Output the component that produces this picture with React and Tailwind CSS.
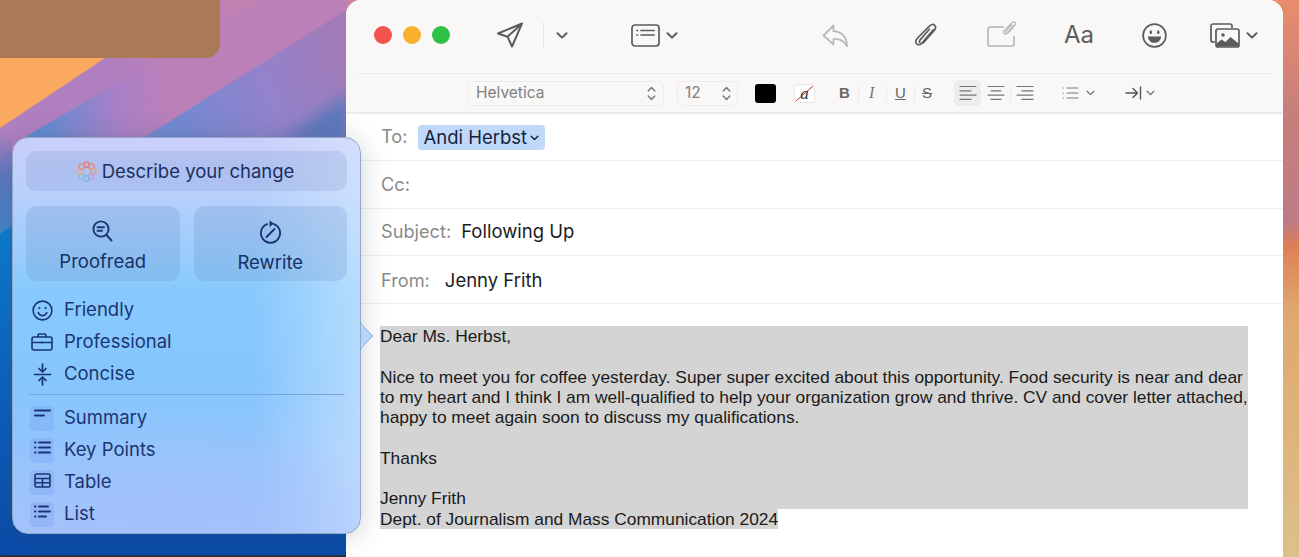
import React from 'react';

const Chevron = ({ className = '', w = 12, h = 7, sw = 2 }) => (
    <svg width={w} height={h} viewBox="0 0 12 7" className={className} fill="none" stroke="currentColor" strokeWidth={sw} strokeLinecap="round" strokeLinejoin="round">
        <path d="M1.5 1.2 6 5.6l4.5-4.4" />
    </svg>
);

const UpDown = () => (
    <svg width="9" height="15" viewBox="0 0 9 15" fill="none" stroke="#777" strokeWidth="1.4" strokeLinecap="round" strokeLinejoin="round">
        <path d="M1.2 5 4.5 1.5 7.8 5M1.2 10l3.3 3.5L7.8 10" />
    </svg>
);

const AlignLines = ({ rows }) => (
    <svg width="18" height="16" viewBox="0 0 18 16" stroke="#777" strokeWidth="1.2" strokeLinecap="round">
        {rows.map(([a, b], i) => <path key={i} d={`M${a} ${1.5 + i * 4.3}H${b}`} />)}
    </svg>
);

const petals = [
    ['#e9727c', 10.5, 3.6], ['#ee7f70', 15.4, 5.6], ['#f0a070', 17.4, 10.5], ['#c79ad8', 15.4, 15.4],
    ['#7fb4ea', 10.5, 17.4], ['#7fc4c8', 5.6, 15.4], ['#e8b088', 3.6, 10.5], ['#ec8a78', 5.6, 5.6],
];

function AiGlyph() {
    return (
        <svg width="21" height="21" viewBox="0 0 21 21" fill="none" strokeWidth="1.5" className="opacity-85">
            {petals.map(([c, x, y]) => <circle key={c + x} cx={x} cy={y} r="2.7" stroke={c} />)}
        </svg>
    );
}

function Wallpaper() {
    return (
        <svg className="absolute inset-0" width="1299" height="557" viewBox="0 0 1299 557">
            <defs>
                <linearGradient id="deep" x1="0" y1="0" x2="0" y2="1">
                    <stop offset="0" stopColor="#0a80d2" />
                    <stop offset="0.5" stopColor="#0a62c0" />
                    <stop offset="1" stopColor="#0a4aa8" />
                </linearGradient>
                <linearGradient id="edge" x1="0" y1="0" x2="0" y2="1">
                    <stop offset="0" stopColor="#b07fc0" />
                    <stop offset="0.4" stopColor="#5f78c0" />
                    <stop offset="1" stopColor="#3f85cc" />
                </linearGradient>
                <linearGradient id="strip" x1="0" y1="0" x2="0" y2="1">
                    <stop offset="0" stopColor="#e98c6c" />
                    <stop offset="0.2" stopColor="#c77f7c" />
                    <stop offset="0.4" stopColor="#bf7a84" />
                    <stop offset="0.44" stopColor="#dd7f56" />
                    <stop offset="0.56" stopColor="#e0a86e" />
                    <stop offset="1" stopColor="#dcc089" />
                </linearGradient>
                <linearGradient id="bandA" gradientUnits="userSpaceOnUse" x1="100" y1="60" x2="320" y2="30">
                    <stop offset="0" stopColor="#b07fc0" />
                    <stop offset="1" stopColor="#cc82a8" />
                </linearGradient>
                <linearGradient id="bandB" gradientUnits="userSpaceOnUse" x1="40" y1="130" x2="170" y2="120">
                    <stop offset="0" stopColor="#5f8cd2" />
                    <stop offset="0.6" stopColor="#a880c8" />
                    <stop offset="1" stopColor="#bb80b8" />
                </linearGradient>
                <linearGradient id="bandC" gradientUnits="userSpaceOnUse" x1="170" y1="130" x2="346" y2="60">
                    <stop offset="0" stopColor="#6f8ad2" />
                    <stop offset="0.55" stopColor="#9382cc" />
                    <stop offset="1" stopColor="#a27cb8" />
                </linearGradient>
                <filter id="softer"><feGaussianBlur stdDeviation="8" /></filter>
            </defs>
            <rect x="0" y="0" width="360" height="557" fill="#fba95f" />
            <polygon points="0,128 105,58 220,0 360,0 360,557 0,557" fill="url(#bandA)" />
            <polygon points="25,137 260,0 346,0 346,10 145,137" fill="url(#bandB)" />
            <polygon points="145,137 346,10 346,137" fill="url(#bandC)" />
            <polygon points="275,145 350,92 350,145" fill="#5a78bc" filter="url(#softer)" />
            <rect x="0" y="132" width="12" height="108" fill="url(#edge)" />
            <polygon points="0,234 40,207 346,207 346,557 0,557" fill="url(#deep)" />
            <rect x="0" y="555" width="346" height="2" fill="#2b3340" />
            <rect x="1270" y="0" width="29" height="557" fill="url(#strip)" />
        </svg>
    );
}

function SendIcon() {
    return (
        <svg width="28" height="26" viewBox="0 0 28 26" fill="none" stroke="#5c5c5c" strokeWidth="2" strokeLinejoin="round" strokeLinecap="round">
            <path d="M26 1.5 2 11.5l9.5 3.2L16 24.5 26 1.5ZM11.5 14.7 26 1.5" />
        </svg>
    );
}

function HeaderIcon() {
    return (
        <svg width="29" height="23" viewBox="0 0 29 23" fill="none" stroke="#5c5c5c" strokeWidth="1.7" strokeLinecap="round">
            <rect x="1" y="1" width="27" height="21" rx="3" />
            <path d="M6 6.5h.6M6 11h.6M10 6.5h13M10 11h13" />
        </svg>
    );
}

function ReplyIcon() {
    return (
        <svg width="27" height="24" viewBox="0 0 27 24" fill="none" stroke="#b9b9b9" strokeWidth="1.8" strokeLinejoin="round">
            <path d="M11.5 1.5 1.5 11.5l10 9v-5.6c6 -.4 10 1.3 13.5 7.3-.2-9.5-5-14.2-13.5-15Z" />
        </svg>
    );
}

function ClipIcon({ stroke = '#5c5c5c', size = 25, sw = 1.6 }) {
    return (
        <svg width={size} height={size} viewBox="0 0 24 24" fill="none" stroke={stroke} strokeWidth={sw} strokeLinecap="round">
            <path d="M19.5 6.5 8.6 19.3c-1.5 1.8-3.7 2-5 .8-1.4-1.2-1.3-3.3.2-5L15.7 3c1.6-1.8 3.8-2.1 5-.9 1.3 1.2 1.2 3.2-.3 5L10 19" />
            <path d="M15.7 6 6.5 16.7c-.6.8-.5 1.5 0 2" />
        </svg>
    );
}

function NoteIcon() {
    return (
        <div className="relative w-[30px] h-[24px]">
            <svg width="28" height="21" viewBox="0 0 28 21" fill="none" stroke="#b5b5b5" strokeWidth="1.6" className="absolute left-0 bottom-0">
                <path d="M17 1H3a2 2 0 0 0-2 2v15a2 2 0 0 0 2 2h22a2 2 0 0 0 2-2V10" />
            </svg>
            <div className="absolute right-[0px] top-[-2px]"><ClipIcon stroke="#b5b5b5" size={15} sw={2} /></div>
        </div>
    );
}

function SmileBig() {
    return (
        <svg width="25" height="25" viewBox="0 0 25 25" fill="none" stroke="#5c5c5c" strokeWidth="1.7">
            <circle cx="12.5" cy="12.5" r="11.4" />
            <ellipse cx="8.8" cy="9.2" rx="1.2" ry="1.9" fill="#5c5c5c" stroke="none" />
            <ellipse cx="16.2" cy="9.2" rx="1.2" ry="1.9" fill="#5c5c5c" stroke="none" />
            <path d="M5.8 13.4h13.4c-.5 4.2-3.2 6.4-6.7 6.4s-6.2-2.2-6.7-6.4Z" fill="#5c5c5c" stroke="none" />
        </svg>
    );
}

function PhotoIcon() {
    return (
        <svg width="30" height="25" viewBox="0 0 30 25" fill="none" stroke="#5c5c5c" strokeWidth="1.7" strokeLinejoin="round">
            <path d="M5 19H3a2 2 0 0 1-2-2V3a2 2 0 0 1 2-2h17a2 2 0 0 1 2 2v2" />
            <rect x="6" y="6" width="23" height="18" rx="2" />
            <circle cx="13" cy="12" r="1.8" fill="#5c5c5c" stroke="none" />
            <path d="M6.5 23.5v-3l5-4 4 2.5 5-5 8 6.5v3Z" fill="#5c5c5c" stroke="none" />
        </svg>
    );
}

function Toolbar() {
    return (
        <div className="h-[73px] flex items-center text-[#5c5c5c] pb-[3px]">
            <span className="ml-[28px] w-[18px] h-[18px] rounded-full bg-[#f4544f]" />
            <span className="ml-[11px] w-[18px] h-[18px] rounded-full bg-[#f9b02c]" />
            <span className="ml-[11px] w-[18px] h-[18px] rounded-full bg-[#2fc046]" />
            <div className="ml-[46px]"><SendIcon /></div>
            <span className="ml-[19px] w-[1px] h-[26px] bg-[#e8e6e6]" />
            <Chevron className="ml-[12px]" />
            <div className="ml-[63px]"><HeaderIcon /></div>
            <Chevron className="ml-[6px]" />
            <div className="ml-[144px] mt-[1px]"><ReplyIcon /></div>
            <div className="ml-[64px]"><ClipIcon /></div>
            <div className="ml-[49px]"><NoteIcon /></div>
            <span className="ml-[47px] text-[24px] leading-none text-[#5c5c5c] font-['Inter',sans-serif]">Aa</span>
            <div className="ml-[48px]"><SmileBig /></div>
            <div className="ml-[43px]"><PhotoIcon /></div>
            <Chevron className="ml-[6px]" />
        </div>
    );
}

function FormatBar() {
    return (
        <div className="mx-[12px] border-t border-[#ecebeb]">
            <div className="h-[38px] flex items-center text-[#6a6a6a] -mx-[12px] font-['Inter',sans-serif]">
                <div className="ml-[121px] w-[197px] h-[25px] border border-[#eeecec] rounded-[5px] flex items-center justify-between pl-[8px] pr-[7px] text-[15.5px] text-[#808080]">
                    <span>Helvetica</span><UpDown />
                </div>
                <div className="ml-[13px] w-[61px] h-[25px] border border-[#eeecec] rounded-[5px] flex items-center justify-between pl-[7px] pr-[6px] text-[15.5px] text-[#808080]">
                    <span>12</span><UpDown />
                </div>
                <span className="ml-[17px] w-[21px] h-[19px] rounded-[3px] bg-black" />
                <div className="ml-[18px] w-[21px] h-[19px] rounded-[3px] border border-[#e8e6e6] bg-white relative flex items-center justify-center">
                    <span className="text-[17px] leading-none italic text-[#333] font-['Liberation_Serif',serif]">a</span>
                    <svg className="absolute inset-0" width="19" height="17" viewBox="0 0 19 17"><path d="M1 16 18 1" stroke="#a33" strokeWidth="1" /></svg>
                </div>
                <span className="ml-[24px] w-[12px] text-[15px] font-bold text-[#666] font-['Liberation_Sans',sans-serif]">B</span>
                <span className="ml-[7px] w-[1px] h-[17px] bg-[#ebe9e9]" />
                <span className="ml-[10px] w-[10px] text-[16px] italic text-[#777] font-['Liberation_Serif',serif]">I</span>
                <span className="ml-[7px] w-[1px] h-[17px] bg-[#ebe9e9]" />
                <span className="ml-[8px] w-[12px] text-[15px] underline text-[#666] font-['Liberation_Sans',sans-serif]">U</span>
                <span className="ml-[7px] w-[1px] h-[17px] bg-[#ebe9e9]" />
                <span className="ml-[7px] w-[12px] text-[15px] line-through text-[#666] font-['Liberation_Sans',sans-serif]">S</span>
                <div className="ml-[20px] w-[27px] h-[26px] rounded-[5px] bg-[#eeeded] flex items-center justify-center">
                    <AlignLines rows={[[1, 17], [1, 12], [1, 17], [1, 12]]} />
                </div>
                <div className="ml-[6px]"><AlignLines rows={[[1, 17], [4, 14], [1, 17], [4, 14]]} /></div>
                <span className="ml-[5px] w-[1px] h-[17px] bg-[#ebe9e9]" />
                <div className="ml-[5px]"><AlignLines rows={[[1, 17], [6, 17], [1, 17], [6, 17]]} /></div>
                <svg className="ml-[28px]" width="17" height="14" viewBox="0 0 17 14" stroke="#777" strokeWidth="1.2" strokeLinecap="round">
                    <path d="M1 2h.3M1 7h.3M1 12h.3M5 2h11M5 7h11M5 12h11" />
                </svg>
                <Chevron className="ml-[7px]" w={9} h={6} sw={1.6} />
                <svg className="ml-[30px]" width="17" height="14" viewBox="0 0 17 14" fill="none" stroke="#555" strokeWidth="1.4" strokeLinecap="round" strokeLinejoin="round">
                    <path d="M1 7h11M8 2.5 12.5 7 8 11.5M15.5 1v12" />
                </svg>
                <Chevron className="ml-[4px]" w={9} h={6} sw={1.6} />
            </div>
        </div>
    );
}

function FieldRow({ h, label, children, gap = 'ml-[10px]', extra = '' }) {
    return (
        <div className={`${h} ${extra} flex items-center pl-[35px] border-b border-[#eeeeee]`}>
            <span className="text-[#8a8a8a] text-[18.2px]">{label}</span>
            <div className={`${gap} text-[#1c1c1e] text-[18.5px]`}>{children}</div>
        </div>
    );
}

function MailWindow() {
    return (
        <div className="ml-[346px] w-[937px] h-full bg-white rounded-t-[15px] flex flex-col font-['Inter',sans-serif]">
            <div className="bg-[#faf7f7] border-b-2 border-[#eceaea] rounded-t-[15px]">
                <Toolbar />
                <FormatBar />
            </div>
            <FieldRow h="h-[47px]" label="To:" gap="ml-[11px] mt-[1px]">
                <span className="inline-flex items-center gap-[3px] h-[25px] pl-[5px] pr-[6px] rounded-[4px] bg-[#c0d8f9] text-[#15233a]">
                    Andi Herbst <Chevron w={9} h={6} sw={2} />
                </span>
            </FieldRow>
            <FieldRow h="h-[48px]" label="Cc:" />
            <FieldRow h="h-[47px]" label="Subject:">Following Up</FieldRow>
            <FieldRow h="h-[48px]" label="From:" gap="ml-[15px]" extra="pt-[3px]">Jenny Frith</FieldRow>
            <div className="pt-[22px] pl-[34px] text-[17.35px] leading-[20.25px] text-[#1a1a1a] font-['Liberation_Sans',sans-serif]">
                <div className="w-[868px] h-[183px] bg-[#d4d4d4] whitespace-nowrap">
                    <p>Dear Ms. Herbst,</p>
                    <p className="mt-[20.25px]">Nice to meet you for coffee yesterday. Super super excited about this opportunity. Food security is near and dear</p>
                    <p>to my heart and I think I am well-qualified to help your organization grow and thrive. CV and cover letter attached,</p>
                    <p>happy to meet again soon to discuss my qualifications.</p>
                    <p className="mt-[20.25px]">Thanks</p>
                    <p className="mt-[20.25px]">Jenny Frith</p>
                </div>
                <p className="w-fit bg-[#d4d4d4] whitespace-nowrap">Dept. of Journalism and Mass Communication 2024</p>
            </div>
        </div>
    );
}

const navy = '#1b3572';

function RowIcon({ children }) {
    return <span className="w-[24px] h-[24px] flex items-center justify-center shrink-0">{children}</span>;
}

function Tile({ children }) {
    return <span className="w-[24px] h-[25px] flex items-start justify-center pt-[3px] rounded-[4px] bg-[#6f94ee]/25 shrink-0">{children}</span>;
}

function ToneRow({ icon, label }) {
    return (
        <div className="h-[32px] flex items-center gap-[10px] text-[18.5px] text-[#1b3572]">
            {icon}<span>{label}</span>
        </div>
    );
}

function ActionButton({ icon, label }) {
    return (
        <div className="h-[75px] flex-1 rounded-[11px] bg-[#5a86c0]/20 flex flex-col items-center pt-[14px] text-[18.5px] text-[#173066]">
            {icon}
            <span className="mt-[5px] leading-[26px]">{label}</span>
        </div>
    );
}

function WritingTools() {
    return (
        <div className="absolute left-[12px] top-[137px] w-[349px] h-[397px] font-['Inter',sans-serif]">
            <div className="absolute inset-0 rounded-[16px] shadow-[0_2px_26px_rgba(60,70,90,0.25)]" />
            <svg className="absolute left-[347px] top-[178px]" width="16" height="42" viewBox="0 0 16 42">
                <path d="M0 0c1 6 2 9 5 12l9 9-9 9c-3 3-4 6-5 12Z" fill="#b4d6fd" stroke="#9ab0c8" strokeWidth="1" />
                <rect x="-1" y="1" width="2" height="40" fill="#b4d6fd" />
            </svg>
            <div className="relative h-full rounded-[16px] border border-[#93a7c4] p-[13px] bg-[radial-gradient(ellipse_70%_30%_at_45%_100%,#a4c0fb_0%,transparent_100%),linear-gradient(90deg,transparent_70%,rgba(220,235,255,0.55)_100%),linear-gradient(180deg,#c9cffa_0%,#b9d0fb_14%,#88cafd_38%,#85c6fd_62%,#a2c4fb_100%)]">
                <div className="h-[40px] rounded-[10px] bg-[#7089c4]/20 flex items-center justify-center gap-[5px] pt-[1px] pr-[3px] text-[18.5px] text-[#1b2f66]">
                    <AiGlyph /><span>Describe your change</span>
                </div>
                <div className="mt-[15px] flex gap-[14px]">
                    <ActionButton label="Proofread" icon={
                        <svg width="21" height="23" viewBox="0 0 21 23" fill="none" stroke={navy} strokeWidth="1.9" strokeLinecap="round">
                            <circle cx="9" cy="9" r="7.6" />
                            <path d="m14.5 15 5 5.5M5.5 7.2h6.5M5.5 10.8h4.5" />
                        </svg>
                    } />
                    <ActionButton label="Rewrite" icon={
                        <svg width="23" height="24" viewBox="0 0 23 24" fill="none" stroke={navy} strokeWidth="1.9" strokeLinecap="round">
                            <path d="M8 4.2a9.6 9.6 0 1 0 7 0" />
                            <path d="M7.5 17 15.5 9" />
                            <path d="M10.5 0.5 15 3.6l-4.5 3.4Z" fill={navy} stroke="none" />
                        </svg>
                    } />
                </div>
                <div className="mt-[13px] pl-[4px]">
                    <ToneRow label="Friendly" icon={
                        <RowIcon><svg width="21" height="21" viewBox="0 0 21 21" fill="none" stroke={navy} strokeWidth="1.6">
                            <circle cx="10.5" cy="10.5" r="9.4" />
                            <circle cx="7.4" cy="8" r="1.1" fill={navy} stroke="none" />
                            <circle cx="13.6" cy="8" r="1.1" fill={navy} stroke="none" />
                            <path d="M6.2 12.6c1 2 2.5 3 4.3 3s3.3-1 4.3-3" strokeLinecap="round" />
                        </svg></RowIcon>
                    } />
                    <ToneRow label="Professional" icon={
                        <RowIcon><svg width="22" height="18" viewBox="0 0 22 18" fill="none" stroke={navy} strokeWidth="1.6" strokeLinejoin="round">
                            <rect x="1" y="4" width="20" height="13" rx="2" />
                            <path d="M7 4V2.5A1.5 1.5 0 0 1 8.5 1h5A1.5 1.5 0 0 1 15 2.5V4M1 9.5h20M11 8.5v2" />
                        </svg></RowIcon>
                    } />
                    <ToneRow label="Concise" icon={
                        <RowIcon><svg width="19" height="23" viewBox="0 0 19 23" fill="none" stroke={navy} strokeWidth="1.7" strokeLinecap="round" strokeLinejoin="round">
                            <path d="M1.5 11.5h16M9.500 1v7.500M6 5.500l3.500 3.500L13 5.500M9.500 22v-7.500M6 17.500l3.500-3.500 3.500 3.500" />
                        </svg></RowIcon>
                    } />
                </div>
                <div className="mt-[4px] mx-[3px] h-[1px] bg-[#7aa3d8]" />
                <div className="mt-[7px] pl-[4px]">
                    <ToneRow label="Summary" icon={
                        <Tile><svg width="17" height="9" viewBox="0 0 17 9" stroke={navy} strokeWidth="2" strokeLinecap="round"><path d="M1 1.5h15M1 6.5h9" /></svg></Tile>
                    } />
                    <ToneRow label="Key Points" icon={
                        <Tile><svg width="17" height="13" viewBox="0 0 17 13" stroke={navy} strokeWidth="2" strokeLinecap="round"><path d="M1 1.5h.5M1 6.5h.5M1 11.5h.5M5 1.5h11M5 6.5h11M5 11.5h11" /></svg></Tile>
                    } />
                    <ToneRow label="Table" icon={
                        <Tile><svg width="17" height="15" viewBox="0 0 17 15" fill="none" stroke={navy} strokeWidth="1.6"><rect x="1" y="1" width="15" height="13" rx="1.5" /><path d="M1 5.5h15M1 9.8h15M8.5 5.5V14" /></svg></Tile>
                    } />
                    <ToneRow label="List" icon={
                        <Tile><svg width="17" height="13" viewBox="0 0 17 13" stroke={navy} strokeWidth="2" strokeLinecap="round"><path d="M1 1.5h.5M1 6.5h.5M1 11.5h.5M5 1.5h9M5 6.5h11M5 11.5h7" /></svg></Tile>
                    } />
                </div>
            </div>
        </div>
    );
}

export default function App() {
    return (
        <div className="relative w-[1299px] h-[557px] overflow-hidden">
            <Wallpaper />
            <div className="absolute left-0 top-0 w-[220px] h-[58px] bg-[#a97a55] rounded-br-[14px]" />
            <div className="relative h-full">
                <MailWindow />
            </div>
            <WritingTools />
        </div>
    );
}
